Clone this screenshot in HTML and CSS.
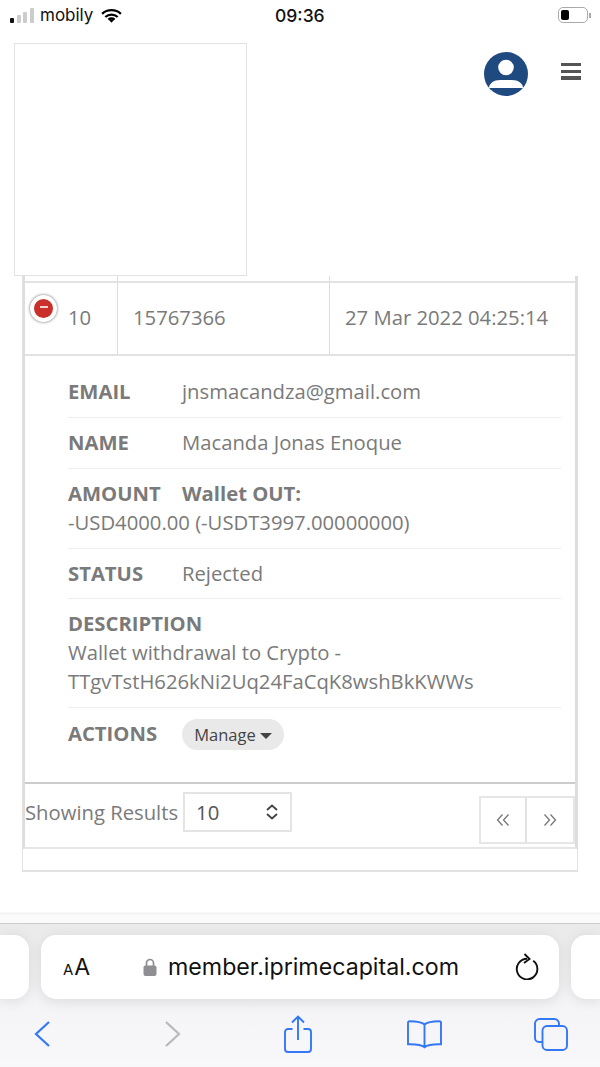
FILE: index.html
```html
<!DOCTYPE html>
<html lang="en">
<head>
    <meta charset="UTF-8">
    <meta name="viewport" content="width=device-width, initial-scale=1.0">
    <title>Transactions</title>
    <link rel="stylesheet" href="styles.css">
</head>
<body>

    <div class="status-bar">
        <div class="signal"><i class="on"></i><i></i><i></i><i></i></div>
        <span class="carrier">mobily</span>
        <svg class="wifi" viewBox="0 0 21 15" width="21" height="15"><path d="M10.500 2.200c-3.600 0-6.900 1.300-9.400 3.600M10.500 6.600c-2.400 0-4.500.9-6.200 2.400M10.500 10.500c-1.300 0-2.300.5-3.100 1.200M10.500 2.200c3.600 0 6.900 1.300 9.400 3.600M10.500 6.600c2.400 0 4.500.9 6.200 2.400M10.500 10.500c1.300 0 2.300.5 3.100 1.200" fill="none" stroke="#000" stroke-width="2.300"/><path d="M8.300 12.300l2.200 2.500 2.200-2.500c-1.300-.9-3.100-.9-4.400 0z"/></svg>
        <span class="clock">09:36</span>
        <div class="battery"><div class="battery-level"></div></div>
        <div class="battery-tip"></div>
    </div>

    <div class="top-bar">
        <div class="logo"></div>
        <svg class="avatar" viewBox="0 0 44 44" width="44" height="44">
            <circle cx="22" cy="22" r="22" fill="#1f4a80"/>
            <circle cx="22" cy="15.500" r="7.800" fill="#fff"/>
            <path d="M5 36c0-4.500 5-8 11-8h12c6 0 11 3.500 11 8z" fill="#fff"/>
        </svg>
        <div class="menu-icon"><i></i><i></i><i></i></div>
    </div>

    <div class="panel">
        <div class="panel-inner">
            <div class="stub-row"><i></i><i></i></div>
            <div class="table-row">
                <div class="cell first-cell">
                    <span class="collapse-btn"><i></i></span>
                    10
                </div>
                <div class="cell">15767366</div>
                <div class="cell">27 Mar 2022 04:25:14</div>
            </div>

            <div class="details">
                <div class="detail">
                    <span class="label">EMAIL</span><span>jnsmacandza@gmail.com</span>
                </div>
                <div class="detail">
                    <span class="label">NAME</span><span>Macanda Jonas Enoque</span>
                </div>
                <div class="detail">
                    <span class="label">AMOUNT</span><b>Wallet OUT:</b><br>-USD4000.00 (-USDT3997.00000000)
                </div>
                <div class="detail detail-status">
                    <span class="label">STATUS</span><span>Rejected</span>
                </div>
                <div class="detail">
                    <b>DESCRIPTION</b><br>Wallet withdrawal to Crypto -<br>TTgvTstH626kNi2Uq24FaCqK8wshBkKWWs
                </div>
                <div class="detail actions">
                    <span class="label">ACTIONS</span>
                    <button class="manage-btn">Manage<i class="caret"></i></button>
                </div>
            </div>

            <div class="table-footer">
                <span class="results-label">Showing Results</span>
                <div class="results-select">
                    <span>10</span>
                    <svg viewBox="0 0 14 16" width="14" height="16"><path d="M2 6l5-4.500 5 4.500M2 10l5 4.500 5-4.500" fill="none" stroke="#444" stroke-width="1.800"/></svg>
                </div>
                <div class="pager">
                    <div class="pager-btn"><svg viewBox="0 0 14 14" width="14" height="14"><path d="M6.500 1.500L1.500 7l5 5.500M12.500 1.500L7.500 7l5 5.500" fill="none" stroke="#777" stroke-width="1.300"/></svg></div>
                    <div class="pager-btn"><svg viewBox="0 0 14 14" width="14" height="14"><path d="M1.500 1.500L6.500 7l-5 5.500M7.500 1.500l5 5.500-5 5.500" fill="none" stroke="#777" stroke-width="1.300"/></svg></div>
                </div>
            </div>
        </div>
        <div class="panel-bottom"></div>
    </div>

    <div class="page-end"></div>

    <div class="browser-bar">
        <div class="url-row">
            <div class="tab-stub left-stub"></div>
            <div class="url-box">
                <span class="aa"><small>A</small>A</span>
                <div class="url-center">
                    <svg viewBox="0 0 14 18" width="14" height="18"><path d="M3.500 8V5a3.500 3.500 0 0 1 7 0v3" fill="none" stroke="#8e8e93" stroke-width="1.700"/><rect x="0.500" y="7.500" width="13" height="10.500" rx="2" fill="#8e8e93"/></svg>
                    <span class="url-text">member.iprimecapital.com</span>
                </div>
                <svg class="reload" viewBox="0 0 24 27" width="24" height="27"><path d="M9 6.200a10.300 10.300 0 1 0 6.500 0" fill="none" stroke="#111" stroke-width="1.900" transform="rotate(18 12 15.500)"/><path d="M9.500 1l5 5-5.500 4" fill="none" stroke="#111" stroke-width="1.900"/></svg>
            </div>
            <div class="tab-stub right-stub"></div>
        </div>
        <div class="tool-row">
            <svg viewBox="0 0 16 26" width="16" height="26"><path d="M15 1L2 13l13 12" fill="none" stroke="#3478f6" stroke-width="2.200"/></svg>
            <svg class="tool-forward" viewBox="0 0 16 26" width="16" height="26"><path d="M1 1l13 12L1 25" fill="none" stroke="#b9b9bd" stroke-width="2.200"/></svg>
            <svg class="tool-share" viewBox="0 0 28 38" width="28" height="38"><path d="M8.500 14H4a3 3 0 0 0-3 3v17a3 3 0 0 0 3 3h20a3 3 0 0 0 3-3V17a3 3 0 0 0-3-3h-4.500" fill="none" stroke="#3478f6" stroke-width="1.900"/><path d="M14 25V2M8 7.500L14 1.500l6 6" fill="none" stroke="#3478f6" stroke-width="1.900"/></svg>
            <svg class="tool-book" viewBox="0 0 35 29" width="35" height="29"><path d="M17.500 4.500C15 2 11 1.200 2.500 1.200 1.500 1.200 1 1.800 1 2.800v21.500c5.500 0 12-.5 16.500 3 4.500-3.500 11-3 16.500-3V2.800c0-1-.5-1.600-1.500-1.600-8.500 0-12.500.8-15 3.300zM17.500 4.500v22.800" fill="none" stroke="#3478f6" stroke-width="1.900"/></svg>
            <svg class="tool-tabs" viewBox="0 0 34 33" width="34" height="33"><rect x="8.500" y="8" width="24.500" height="24" rx="4.500" fill="none" stroke="#3478f6" stroke-width="1.900"/><path d="M8.500 24H5a4 4 0 0 1-4-4V5.500A4.500 4.500 0 0 1 5.500 1h15A4.500 4.500 0 0 1 25 5.500V8" fill="none" stroke="#3478f6" stroke-width="1.900"/></svg>
        </div>
    </div>

</body>
</html>
```

FILE: styles.css
```css
* {
    box-sizing: border-box;
}
body {
    margin: 0;
    height: 1067px;
    overflow: hidden;
    display: flex;
    flex-direction: column;
    background: white;
    color: #7a7a7a;
    font-family: "Open Sans", sans-serif;
    font-size: 20.250px;
}
.status-bar {
    height: 30px;
    display: flex;
    align-items: center;
    padding-left: 10px;
    color: #111;
    font-family: Inter, sans-serif;
}
.signal {
    display: flex;
    align-items: flex-end;
    gap: 2.600px;
    height: 15px;
    width: 24px;
}
.signal i {
    width: 4px;
    background: #ccc;
    border-radius: 1px;
}
.signal i:nth-child(1) { height: 5px; background: #111; }
.signal i:nth-child(2) { height: 8px; }
.signal i:nth-child(3) { height: 11px; }
.signal i:nth-child(4) { height: 15px; }
.carrier {
    font-size: 17px;
    margin-left: 6px;
    width: 61px;
}
.wifi {
    margin-right: 153px;
}
.clock {
    font-size: 17.500px;
    font-weight: 500;
    width: 283px;
}
.battery {
    width: 30px;
    height: 16px;
    border: 1.500px solid #aaa;
    border-radius: 5px;
    padding: 2px;
}
.battery-level {
    width: 8px;
    height: 100%;
    background: black;
    border-radius: 2px;
}
.battery-tip {
    width: 1.500px;
    height: 5px;
    margin-left: 1px;
    background: #aaa;
}
.top-bar {
    height: 246px;
    display: flex;
    align-items: flex-start;
    padding: 13px 19px 0 14px;
}
.logo {
    width: 233px;
    height: 233px;
    background: white;
    border: 1px solid #e2e2e2;
    position: relative;
    z-index: 1;
}
.avatar {
    margin: 9px 33px 0 auto;
}
.menu-icon {
    margin-top: 20px;
    width: 20px;
    display: flex;
    flex-direction: column;
    gap: 3.300px;
}
.menu-icon i {
    height: 3.400px;
    background: #555;
}
.panel {
    margin-left: 22px;
    width: 556px;
    border: solid #e2e2e2;
    border-width: 0 1px 2px 1px;
}
.panel-inner {
    border-left: 2px solid #ddd;
    border-right: 3px solid #ddd;
    border-bottom: 2px solid #e6e6e6;
    margin-right: -1px;
}
.stub-row {
    height: 5px;
    display: flex;
}
.stub-row i {
    height: 5px;
    border-right: 1px solid #ddd;
}
.stub-row i:nth-child(1) { width: 93px; }
.stub-row i:nth-child(2) { width: 212px; }
.table-row {
    display: grid;
    grid-template-columns: 93px 212px 1fr;
    height: 75px;
    border-top: 2px solid #e2e2e2;
    border-bottom: 2px solid #e2e2e2;
}
.cell {
    display: flex;
    align-items: center;
    padding: 0 0 3px 15px;
    border-right: 1px solid #ddd;
    white-space: nowrap;
}
.cell:last-child {
    border-right: none;
}
.first-cell {
    position: relative;
    padding-left: 43px;
}
.collapse-btn {
    position: absolute;
    left: 5px;
    top: 12px;
    width: 27px;
    height: 27px;
    border-radius: 50%;
    background: #c9302c;
    border: 4px solid white;
    box-shadow: 0 0 3px #666;
    display: flex;
    align-items: center;
    justify-content: center;
}
.collapse-btn i {
    width: 8px;
    height: 2px;
    margin-top: -3px;
    background: #f5d0ce;
}
.details {
    padding: 11px 14px 0 43px;
    height: 426px;
    line-height: 29px;
}
.detail {
    padding: 10px 0 11px;
    border-bottom: 1px solid #eee;
}
.detail-status {
    padding-bottom: 10px;
}
.detail b {
    font-weight: 700;
}
.label {
    display: inline-block;
    width: 114px;
    font-weight: 700;
}
.actions {
    border-bottom: none;
    display: flex;
    align-items: center;
    padding-top: 11px;
}
.actions .label {
    margin-top: -3px;
}
.manage-btn {
    width: 102px;
    height: 31px;
    border: none;
    border-radius: 16px;
    background: #e9e9e9;
    color: #444;
    font-family: "Open Sans", sans-serif;
    font-size: 16.500px;
    padding: 0;
}
.caret {
    display: inline-block;
    margin-left: 4px;
    vertical-align: 2px;
    border: 6px solid transparent;
    border-top-color: #444;
    border-bottom: none;
}
.table-footer {
    display: flex;
    align-items: flex-start;
    height: 65px;
    border-top: 2px solid #ccc;
}
.results-label {
    margin-top: 15px;
    line-height: 27px;
    white-space: nowrap;
}
.results-select {
    width: 109px;
    height: 40px;
    margin: 8px 0 0 5px;
    border: 2px solid #e4e4e4;
    display: flex;
    align-items: center;
    justify-content: space-between;
    padding: 0 11px;
    color: #555;
}
.pager {
    display: flex;
    margin: 12px 0 0 auto;
    height: 48px;
    border: 2px solid #e6e6e6;
}
.pager-btn {
    width: 46px;
    display: flex;
    align-items: center;
    justify-content: center;
}
.pager-btn:first-child {
    border-right: 2px solid #e2e2e2;
}
.panel-bottom {
    height: 21px;
}
.page-end {
    flex: 1;
    background: linear-gradient(white 40px, #f1f1f1 41px, #fafafa 43px, #fafafa 100%);
}
.browser-bar {
    height: 144px;
    border-top: 1px solid #ccc;
    background: linear-gradient(#eaeaea, #f4f4f6 50%, #f8f8fa);
}
.url-row {
    display: flex;
    justify-content: space-between;
    margin-top: 11px;
    height: 64px;
}
.tab-stub {
    width: 29px;
    background: white;
    box-shadow: 0 2px 14px rgba(0, 0, 0, 0.1);
}
.left-stub {
    border-radius: 0 15px 15px 0;
}
.right-stub {
    border-radius: 15px 0 0 15px;
}
.url-box {
    width: 518px;
    display: flex;
    align-items: center;
    padding: 0 20px 0 22px;
    background: white;
    border-radius: 15px;
    box-shadow: 0 3px 14px rgba(0, 0, 0, 0.1);
    color: #111;
    font-family: Inter, sans-serif;
}
.aa {
    font-size: 23px;
    width: 28px;
    white-space: nowrap;
}
.aa small {
    font-size: 15px;
    margin-right: 1px;
}
.url-center {
    display: flex;
    align-items: center;
    gap: 11px;
    margin-left: 52px;
}
.url-text {
    font-size: 23.200px;
    white-space: nowrap;
}
.reload {
    margin-left: auto;
    margin-top: -1px;
}
.tool-row {
    display: flex;
    align-items: center;
    padding: 16px 0 0 34px;
}
.tool-forward { margin-left: 115px; }
.tool-share { margin-left: 103px; }
.tool-book { margin-left: 95px; }
.tool-tabs { margin-left: 92px; }
```
